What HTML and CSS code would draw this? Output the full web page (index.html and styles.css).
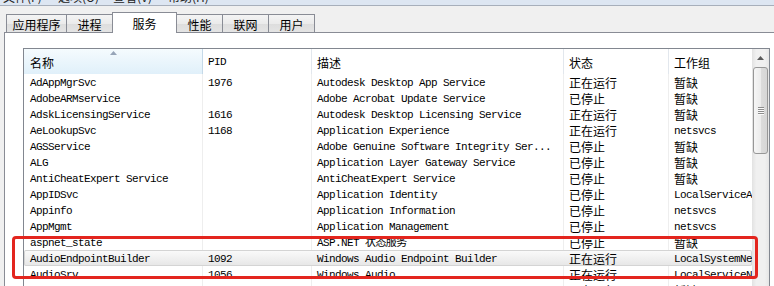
FILE: index.html
```html
<!DOCTYPE html>
<html lang="zh-CN">
<head>
<meta charset="utf-8">
<title>任务管理器 - 服务</title>
<link rel="stylesheet" href="styles.css">
</head>
<body>
<div class="menubar">
  <span>文件(F)</span><span>选项(O)</span><span>查看(V)</span><span>帮助(H)</span>
</div>
<div class="tabstrip">
  <div class="tab w61">应用程序</div>
  <div class="tab w47">进程</div>
  <div class="tab active">服务</div>
  <div class="tab w47">性能</div>
  <div class="tab w47">联网</div>
  <div class="tab w47">用户</div>
</div>
<div class="panel">
  <div class="list">
    <div class="main">
      <div class="hdr">
        <div class="sorted cjk">名称<svg class="sortarrow" width="7" height="4" viewBox="0 0 7 4"><path d="M0 4 L3.5 0 L7 4 Z" fill="#97a5b8"/></svg></div>
        <div class="mono">PID</div>
        <div class="cjk">描述</div>
        <div class="cjk">状态</div>
        <div class="cjk last">工作组</div>
      </div>
      <div class="row"><div class="mono">AdAppMgrSvc</div><div class="mono">1976</div><div class="mono">Autodesk Desktop App Service</div><div class="cjk">正在运行</div><div class="cjk last">暂缺</div></div>
      <div class="row"><div class="mono">AdobeARMservice</div><div class="mono"></div><div class="mono">Adobe Acrobat Update Service</div><div class="cjk">已停止</div><div class="cjk last">暂缺</div></div>
      <div class="row"><div class="mono">AdskLicensingService</div><div class="mono">1616</div><div class="mono">Autodesk Desktop Licensing Service</div><div class="cjk">正在运行</div><div class="cjk last">暂缺</div></div>
      <div class="row"><div class="mono">AeLookupSvc</div><div class="mono">1168</div><div class="mono">Application Experience</div><div class="cjk">正在运行</div><div class="mono last">netsvcs</div></div>
      <div class="row"><div class="mono">AGSService</div><div class="mono"></div><div class="mono">Adobe Genuine Software Integrity Ser...</div><div class="cjk">已停止</div><div class="cjk last">暂缺</div></div>
      <div class="row"><div class="mono">ALG</div><div class="mono"></div><div class="mono">Application Layer Gateway Service</div><div class="cjk">已停止</div><div class="cjk last">暂缺</div></div>
      <div class="row"><div class="mono">AntiCheatExpert Service</div><div class="mono"></div><div class="mono">AntiCheatExpert Service</div><div class="cjk">已停止</div><div class="cjk last">暂缺</div></div>
      <div class="row"><div class="mono">AppIDSvc</div><div class="mono"></div><div class="mono">Application Identity</div><div class="cjk">已停止</div><div class="mono last">LocalServiceAndNoImpersonation</div></div>
      <div class="row"><div class="mono">Appinfo</div><div class="mono"></div><div class="mono">Application Information</div><div class="cjk">已停止</div><div class="mono last">netsvcs</div></div>
      <div class="row"><div class="mono">AppMgmt</div><div class="mono"></div><div class="mono">Application Management</div><div class="cjk">已停止</div><div class="mono last">netsvcs</div></div>
      <div class="row"><div class="mono">aspnet_state</div><div class="mono"></div><div class="mono">ASP.NET 状态服务</div><div class="cjk">已停止</div><div class="cjk last">暂缺</div></div>
      <div class="row sel"><div class="mono">AudioEndpointBuilder</div><div class="mono">1092</div><div class="mono">Windows Audio Endpoint Builder</div><div class="cjk">正在运行</div><div class="mono last">LocalSystemNetworkRestricted</div></div>
      <div class="row"><div class="mono">AudioSrv</div><div class="mono">1056</div><div class="mono">Windows Audio</div><div class="cjk">正在运行</div><div class="mono last">LocalServiceNetworkRestricted</div></div>
      <div class="row"><div class="mono">axsvc</div><div class="mono"></div><div class="mono">on-access scan</div><div class="cjk">正在运行</div><div class="cjk last">暂缺</div></div>
    </div>
    <div class="scroll">
      <div class="sb-up"><svg width="7" height="4" viewBox="0 0 7 4"><path d="M0 4 L3.5 0 L7 4 Z" fill="#5a5a5a"/></svg></div>
      <div class="thumb"><div class="grip"><i></i><i></i><i></i><i></i></div></div>
    </div>
  </div>
</div>
<div class="annot"></div>
</body>
</html>
```
FILE: styles.css
```css
body {
  margin: 0;
  width: 774px;
  height: 286px;
  overflow: hidden;
  position: relative;
  background: #f0f0f0;
  color: #000;
  font-family: "Noto Sans CJK SC", "Liberation Sans", sans-serif;
  font-size: 12px;
}

.menubar {
  height: 5px;
  border-bottom: 1px solid #a7afbb;
  background: #dde6f2;
  overflow: hidden;
  display: flex;
  padding-left: 3px;
}
.menubar span {
  flex: none;
  width: 55px;
  line-height: 16px;
  margin-top: -11px;
  color: #222;
  white-space: nowrap;
}

.tabstrip {
  height: 26px;
  display: flex;
  align-items: flex-end;
  padding-left: 6px;
}
.tab {
  box-sizing: border-box;
  height: 18px;
  border: 1px solid #898c95;
  border-bottom: none;
  margin-left: -1px;
  background: linear-gradient(#f4f4f4, #ebebeb 50%, #dddddd 51%, #e4e4e4);
  text-align: center;
  line-height: 15px;
  padding-top: 2px;
  white-space: nowrap;
}
.tab:first-child { margin-left: 0; }
.tab.w61 { width: 61px; }
.tab.w47 { width: 47px; }
.tab.active {
  width: 65px;
  height: 21px;
  margin-bottom: -1px;
  padding-top: 3px;
  background: #fff;
  position: relative;
  z-index: 1;
}

.panel {
  margin-left: 4px;
  border-left: 1px solid #898c95;
  border-top: 1px solid #898c95;
  background: #fff;
  padding: 15px 0 0 18px;
  height: 300px;
}

.list {
  box-sizing: border-box;
  width: 747px;
  height: 280px;
  border: 1px solid #828790;
  display: flex;
}
.main {
  flex: none;
  width: 728px;
}

.hdr, .row {
  display: grid;
  grid-template-columns: 179px 109px 252px 105px 83px;
}
.hdr { height: 25px; }
.hdr > div {
  box-sizing: border-box;
  border-right: 1px solid #e2e7ed;
  padding-left: 5px;
  line-height: 27px;
  white-space: nowrap;
  overflow: hidden;
}
.hdr > .sorted {
  position: relative;
  padding-left: 6px;
  background: linear-gradient(#f5fbfe, #e0f0fa);
  border-right-color: #c5d9e8;
}
.sortarrow {
  position: absolute;
  left: 86px;
  top: 2px;
}
.hdr > .last, .row > .last { border-right: none; }

.row {
  height: 16px;
  line-height: 16px;
}
.row > div {
  box-sizing: border-box;
  height: 16px;
  border-right: 1px solid #eeeeee;
  padding-left: 5px;
  padding-top: 1px;
  white-space: nowrap;
  overflow: hidden;
}
.row > div:first-child { padding-left: 6px; }
.row.sel {
  background: linear-gradient(#fbfbfb, #e6e6e6);
  box-shadow: inset 0 0 0 1px #d4d4d4;
  border-radius: 2px;
}
.row.sel > div { border-right-color: transparent; }

.mono {
  font-family: "Liberation Mono", "Noto Sans CJK SC", monospace;
  font-size: 11px;
  letter-spacing: -0.6px;
}
.cjk {
  font-family: "Noto Sans CJK SC", sans-serif;
  font-size: 12px;
}

.scroll {
  flex: none;
  width: 17px;
  display: flex;
  flex-direction: column;
  background: linear-gradient(90deg, #e2e2e2, #f0f0f0 25%, #f0f0f0 75%, #e6e6e6);
}
.sb-up {
  height: 17px;
  display: flex;
  align-items: center;
  justify-content: center;
}
.thumb {
  box-sizing: border-box;
  height: 87px;
  margin: 1px 1px 0 1px;
  border: 1px solid #979797;
  border-radius: 3px;
  background: linear-gradient(90deg, #f6f6f6, #ececec 50%, #dcdcdc 51%, #d6d6d6);
  display: flex;
  align-items: center;
  justify-content: center;
}
.grip {
  display: flex;
  flex-direction: column;
  gap: 1px;
}
.grip i {
  display: block;
  width: 6px;
  height: 1px;
  background: #8c8c8c;
  box-shadow: 0 1px 0 #fafafa;
}

.annot {
  position: absolute;
  left: 12px;
  top: 236px;
  width: 746px;
  height: 43px;
  box-sizing: border-box;
  border: 3px solid #e3251e;
  border-radius: 4px;
}
```
